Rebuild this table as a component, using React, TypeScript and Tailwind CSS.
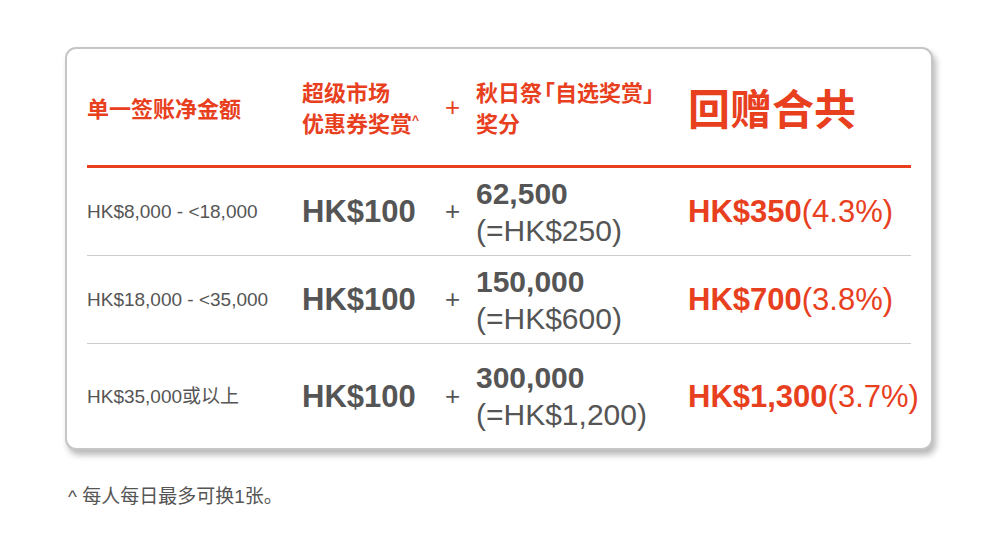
import React from "react";

const latin = "font-['Liberation_Sans','Noto_Sans_CJK_SC',sans-serif]";
const cjk = "font-['Noto_Sans_CJK_SC',sans-serif]";

type Row = {
  range: string;
  points: string;
  pointsValue: string;
  total: string;
  pct: string;
};

const rows: Row[] = [
  { range: "HK$8,000 - <18,000", points: "62,500", pointsValue: "(=HK$250)", total: "HK$350", pct: "(4.3%)" },
  { range: "HK$18,000 - <35,000", points: "150,000", pointsValue: "(=HK$600)", total: "HK$700", pct: "(3.8%)" },
  { range: "HK$35,000或以上", points: "300,000", pointsValue: "(=HK$1,200)", total: "HK$1,300", pct: "(3.7%)" },
];

const cols = "grid grid-cols-[215px_143px_31px_212px_1fr] items-center";

export default function App() {
  return (
    <div className="w-[1000px] h-[541px] bg-white relative overflow-hidden">
      <div className="ml-[65px] mt-[47px] w-[868px] border-2 border-[#c6c6c6] rounded-[11px] bg-white shadow-[3px_5px_6px_rgba(0,0,0,0.28)] px-[20px]">
        {/* header */}
        <div className={`${cols} h-[119px] border-b-[3px] border-[#e8401e] text-[#e8401e]`}>
          <div className={`${cjk} text-[22px] font-bold leading-[31px]`}>单一签账净金额</div>
          <div className={`${cjk} text-[22px] font-bold leading-[31px]`}>
            超级市场
            <br />
            优惠券奖赏<span className={`${latin} text-[12px] align-top relative top-[-2px]`}>^</span>
          </div>
          <div className={`${latin} text-[26px] font-normal`}>+</div>
          <div className={`${cjk} text-[22px] font-bold leading-[31px]`}>
            秋日祭<span className="[font-feature-settings:'halt'] inline-block ml-[2px]">「</span>自选奖赏<span className="[font-feature-settings:'halt']">」</span>
            <br />
            奖分
          </div>
          <div className={`${cjk} text-[42px] font-bold leading-none`}>回赠合共</div>
        </div>

        {/* body rows */}
        {rows.map((r, i) => (
          <div
            key={r.range}
            className={`${cols} ${i < rows.length - 1 ? "h-[88px] border-b border-[#cccccc]" : "h-[104px]"} text-[#555555] ${latin}`}
          >
            <div className="text-[19px] leading-none">{r.range}</div>
            <div className="text-[31px] font-bold leading-none">HK$100</div>
            <div className="text-[26px]">+</div>
            <div className="flex flex-col leading-[37px]">
              <span className="text-[30px] font-bold">{r.points}</span>
              <span className="text-[30px]">{r.pointsValue}</span>
            </div>
            <div className="text-[31px] leading-none text-[#e8401e] whitespace-nowrap">
              <span className="font-bold">{r.total}</span>
              <span>{r.pct}</span>
            </div>
          </div>
        ))}
      </div>

      <p className={`${latin} ml-[68px] mt-[33px] text-[19px] text-[#555555]`}>^ 每人每日最多可换1张。</p>
    </div>
  );
}
